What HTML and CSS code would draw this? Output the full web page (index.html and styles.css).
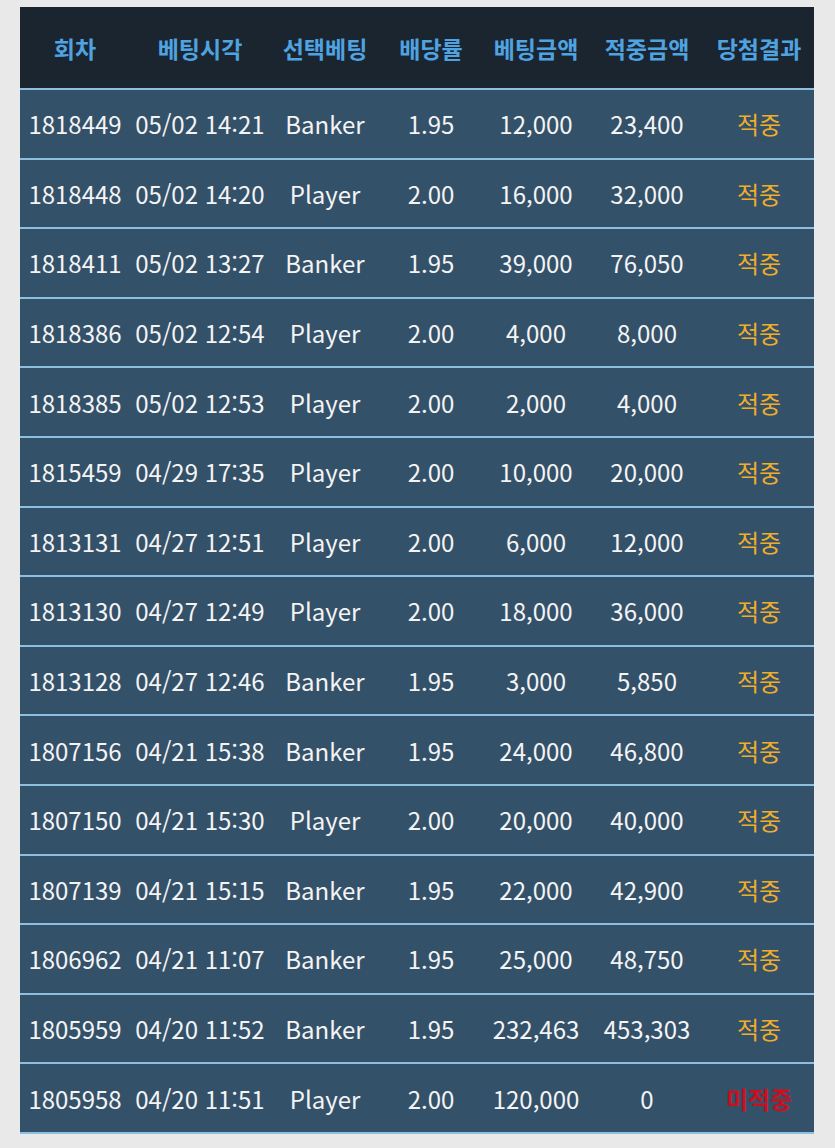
FILE: index.html
```html
<!DOCTYPE html>
<html lang="ko">
<head>
    <meta charset="UTF-8">
    <meta name="viewport" content="width=device-width, initial-scale=1.0">
    <title>베팅내역</title>
    <link rel="stylesheet" href="styles.css">
</head>
<body>
    <table class="history">
        <colgroup>
            <col class="c-round">
            <col class="c-time">
            <col class="c-pick">
            <col class="c-odds">
            <col class="c-bet">
            <col class="c-win">
            <col class="c-result">
        </colgroup>
        <thead>
            <tr>
                <th>회차</th>
                <th>베팅시각</th>
                <th>선택베팅</th>
                <th>배당률</th>
                <th>베팅금액</th>
                <th>적중금액</th>
                <th>당첨결과</th>
            </tr>
        </thead>
        <tbody>
            <tr><td>1818449</td><td>05/02 14:21</td><td>Banker</td><td>1.95</td><td>12,000</td><td>23,400</td><td class="hit">적중</td></tr>
            <tr><td>1818448</td><td>05/02 14:20</td><td>Player</td><td>2.00</td><td>16,000</td><td>32,000</td><td class="hit">적중</td></tr>
            <tr><td>1818411</td><td>05/02 13:27</td><td>Banker</td><td>1.95</td><td>39,000</td><td>76,050</td><td class="hit">적중</td></tr>
            <tr><td>1818386</td><td>05/02 12:54</td><td>Player</td><td>2.00</td><td>4,000</td><td>8,000</td><td class="hit">적중</td></tr>
            <tr><td>1818385</td><td>05/02 12:53</td><td>Player</td><td>2.00</td><td>2,000</td><td>4,000</td><td class="hit">적중</td></tr>
            <tr><td>1815459</td><td>04/29 17:35</td><td>Player</td><td>2.00</td><td>10,000</td><td>20,000</td><td class="hit">적중</td></tr>
            <tr><td>1813131</td><td>04/27 12:51</td><td>Player</td><td>2.00</td><td>6,000</td><td>12,000</td><td class="hit">적중</td></tr>
            <tr><td>1813130</td><td>04/27 12:49</td><td>Player</td><td>2.00</td><td>18,000</td><td>36,000</td><td class="hit">적중</td></tr>
            <tr><td>1813128</td><td>04/27 12:46</td><td>Banker</td><td>1.95</td><td>3,000</td><td>5,850</td><td class="hit">적중</td></tr>
            <tr><td>1807156</td><td>04/21 15:38</td><td>Banker</td><td>1.95</td><td>24,000</td><td>46,800</td><td class="hit">적중</td></tr>
            <tr><td>1807150</td><td>04/21 15:30</td><td>Player</td><td>2.00</td><td>20,000</td><td>40,000</td><td class="hit">적중</td></tr>
            <tr><td>1807139</td><td>04/21 15:15</td><td>Banker</td><td>1.95</td><td>22,000</td><td>42,900</td><td class="hit">적중</td></tr>
            <tr><td>1806962</td><td>04/21 11:07</td><td>Banker</td><td>1.95</td><td>25,000</td><td>48,750</td><td class="hit">적중</td></tr>
            <tr><td>1805959</td><td>04/20 11:52</td><td>Banker</td><td>1.95</td><td>232,463</td><td>453,303</td><td class="hit">적중</td></tr>
            <tr><td>1805958</td><td>04/20 11:51</td><td>Player</td><td>2.00</td><td>120,000</td><td>0</td><td class="miss">미적중</td></tr>
        </tbody>
    </table>
</body>
</html>
```

FILE: styles.css
```css
body {
    margin: 7px 0 0 20px;
    background-color: #e9e9e9;
    font-family: "Noto Sans CJK KR", "Noto Sans", sans-serif;
}

.history {
    width: 794px;
    border-collapse: collapse;
    table-layout: fixed;
}

.c-round { width: 110px; }
.c-time { width: 140px; }
.c-pick { width: 110px; }
.c-odds { width: 102px; }
.c-bet { width: 108px; }
.c-win { width: 114px; }
.c-result { width: 110px; }

.history th {
    height: 81px;
    padding: 0;
    background-color: #1b2530;
    color: #4fa3e0;
    font-size: 23px;
    font-weight: bold;
    text-align: center;
    white-space: nowrap;
}

.history td {
    height: 67.6px;
    padding: 0;
    background-color: #34516a;
    border-top: 2px solid #8fbfe0;
    color: #f4f4f4;
    font-size: 24px;
    text-align: center;
    white-space: nowrap;
}

.history tbody tr:last-child td {
    border-bottom: 2px solid #8fbfe0;
}

.history td.hit {
    color: #f0ad2a;
}

.history td.miss {
    color: #c8101e;
    font-weight: bold;
}
```
